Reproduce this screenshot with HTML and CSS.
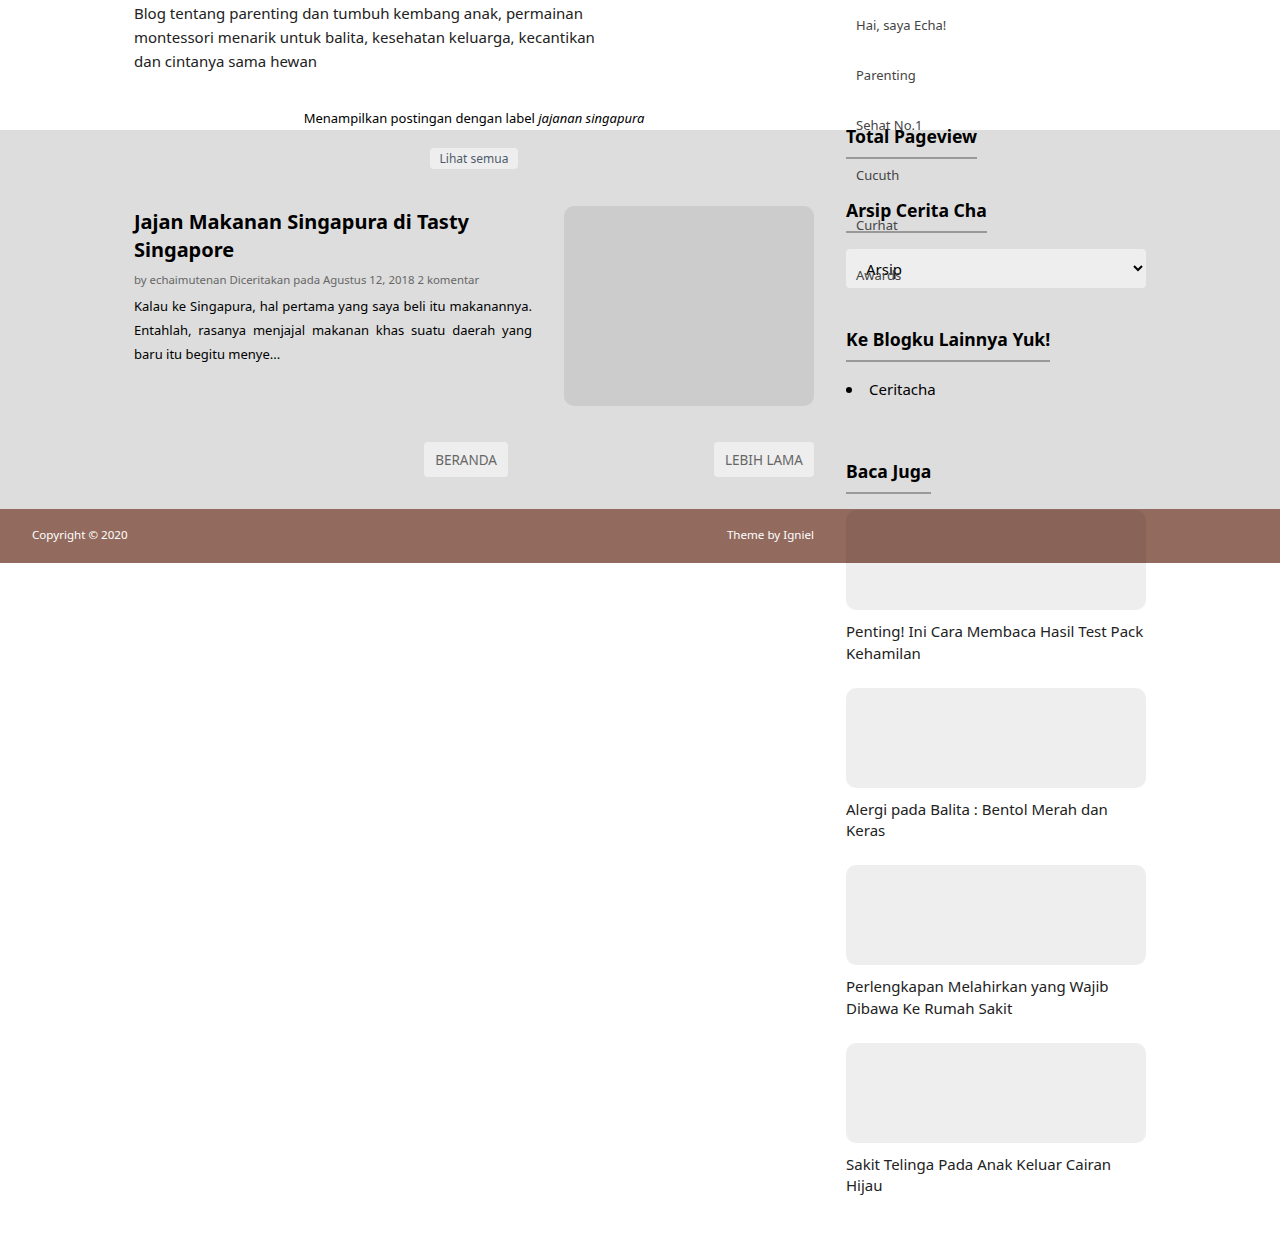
FILE: index.html
```html
<!DOCTYPE html>
<html lang="id">
<head>
<meta charset="utf-8">
<title>Jajanan singapura</title>
<link rel="stylesheet" href="styles.css">
</head>
<body>
<div class="page">
  <header class="band band-head">
    <p class="desc">Blog tentang parenting dan tumbuh kembang anak, permainan montessori menarik untuk balita, kesehatan keluarga, kecantikan dan cintanya sama hewan</p>
    <div class="label-note">Menampilkan postingan dengan label <em>jajanan singapura</em></div>
  </header>

  <main class="band band-main">
    <div class="main-col">
      <div class="see-all-row"><a class="see-all" href="#">Lihat semua</a></div>
      <article class="post">
        <div class="post-text">
          <h1 class="post-title">Jajan Makanan Singapura di Tasty Singapore</h1>
          <div class="post-meta">by echaimutenan Diceritakan pada Agustus 12, 2018 2 komentar</div>
          <p class="post-excerpt">Kalau ke Singapura, hal pertama yang saya beli itu makanannya. Entahlah, rasanya menjajal makanan khas suatu daerah yang baru itu begitu menye...</p>
        </div>
        <div class="post-thumb"></div>
      </article>
      <nav class="pager">
        <a class="pager-btn" href="#">Beranda</a>
        <a class="pager-btn" href="#">Lebih lama</a>
      </nav>
    </div>
  </main>

  <footer class="band band-foot">
    <div class="foot-inner">
      <span>Copyright © 2020</span>
      <span>Theme by Igniel</span>
    </div>
  </footer>

  <nav class="menu">
    <a href="#">Hai, saya Echa!</a>
    <a href="#">Parenting</a>
    <a href="#">Sehat No.1</a>
    <a href="#">Cucuth</a>
    <a href="#">Curhat</a>
    <a href="#">Awards</a>
  </nav>

  <aside class="sidebar">
    <section class="widget">
      <h2 class="widget-title">Total Pageview</h2>
    </section>
    <section class="widget">
      <h2 class="widget-title">Arsip Cerita Cha</h2>
      <select class="archive"><option>Arsip</option></select>
    </section>
    <section class="widget">
      <h2 class="widget-title">Ke Blogku Lainnya Yuk!</h2>
      <ul class="blog-list"><li>Ceritacha</li></ul>
    </section>
    <section class="widget">
      <h2 class="widget-title">Baca Juga</h2>
      <div class="related">
        <a class="rel-item" href="#"><div class="rel-thumb"></div><div class="rel-title">Penting! Ini Cara Membaca Hasil Test Pack Kehamilan</div></a>
        <a class="rel-item" href="#"><div class="rel-thumb"></div><div class="rel-title">Alergi pada Balita : Bentol Merah dan Keras</div></a>
        <a class="rel-item" href="#"><div class="rel-thumb"></div><div class="rel-title">Perlengkapan Melahirkan yang Wajib Dibawa Ke Rumah Sakit</div></a>
        <a class="rel-item" href="#"><div class="rel-thumb"></div><div class="rel-title">Sakit Telinga Pada Anak Keluar Cairan Hijau</div></a>
      </div>
    </section>
  </aside>
</div>
</body>
</html>
```

FILE: styles.css
```css
* { box-sizing: border-box; }
html, body { margin: 0; padding: 0; background: #fff; }
body {
  font-family: "Noto Sans", "Open Sans", sans-serif;
  color: #222;
}
a { text-decoration: none; color: inherit; }

.page {
  display: grid;
  grid-template-columns: 134px 680px 32px 300px 1fr;
  grid-template-rows: 130px 379px 54px auto;
  min-height: 1235px;
}

.band { grid-column: 1 / -1; }

.band-head {
  grid-row: 1;
  background: #fff;
  padding-left: 134px;
  display: flex;
  flex-direction: column;
}
.desc {
  margin: 1px 0 0;
  width: 470px;
  font-size: 15px;
  line-height: 24px;
  color: #222;
}
.label-note {
  width: 680px;
  margin-top: auto;
  margin-bottom: 3px;
  text-align: center;
  font-size: 13px;
  line-height: 18px;
  color: #000;
}

.band-main {
  grid-row: 2;
  background: #ddd;
  padding-left: 134px;
}
.main-col {
  width: 680px;
  padding-top: 18px;
}
.see-all-row { display: flex; justify-content: center; }
.see-all {
  background: #eee;
  border-radius: 4px;
  font-size: 12px;
  line-height: 21px;
  padding: 0 10px;
  color: #4f5b6b;
}

.post {
  display: flex;
  gap: 32px;
  margin-top: 37px;
}
.post-text { width: 398px; }
.post-title {
  margin: 2px 0 0;
  font-size: 20px;
  line-height: 28px;
  font-weight: 700;
  color: #000;
}
.post-meta {
  margin-top: 7px;
  font-size: 11.4px;
  line-height: 18px;
  color: #666;
}
.post-excerpt {
  margin: 5px 0 0;
  font-size: 13px;
  line-height: 24px;
  text-align: justify;
  color: #000;
}
.post-thumb {
  width: 250px;
  height: 200px;
  border-radius: 10px;
  background: #ccc;
}

.pager {
  display: flex;
  justify-content: flex-end;
  gap: 206px;
  margin-top: 36px;
}
.pager-btn {
  background: #eee;
  border-radius: 4px;
  height: 35px;
  line-height: 36px;
  padding: 0 11px;
  font-size: 13.5px;
  text-transform: uppercase;
  color: #666;
}

.band-foot {
  grid-row: 3;
  background: #936b5e;
  display: flex;
  align-items: center;
  padding-left: 32px;
}
.foot-inner {
  width: 782px;
  display: flex;
  justify-content: space-between;
  font-size: 11.6px;
  line-height: 16px;
  color: #fff;
  margin-top: -2px;
}

.menu {
  grid-column: 4;
  grid-row: 1 / span 2;
  align-self: start;
  z-index: 3;
  display: flex;
  flex-direction: column;
  padding-left: 10px;
}
.menu a {
  font-size: 13px;
  line-height: 50px;
  color: #444;
}

.sidebar {
  grid-column: 4;
  grid-row: 2 / span 3;
  z-index: 2;
  margin-top: -6px;
  display: flex;
  flex-direction: column;
}
.widget { margin-bottom: 39px; }
.widget-title {
  display: inline-block;
  margin: 0 0 16px;
  padding-bottom: 9px;
  border-bottom: 2px solid #999;
  font-size: 17.6px;
  line-height: 24px;
  font-weight: 700;
  color: #000;
}
.widget:first-child .widget-title { margin-bottom: 0; }
.archive {
  display: block;
  width: 300px;
  height: 39px;
  border: none;
  border-radius: 4px;
  background: #eee;
  font-family: inherit;
  font-size: 15px;
  color: #000;
  padding-left: 16px;
}
.blog-list {
  margin: 0 0 20px;
  padding: 0;
  list-style: none;
  font-size: 15px;
  line-height: 22px;
  color: #000;
}
.blog-list li {
  display: flex;
  align-items: center;
}
.blog-list li::before {
  content: "";
  width: 6px;
  height: 6px;
  border-radius: 50%;
  background: #000;
  margin: 1px 17px 0 0;
}
.related { display: flex; flex-direction: column; gap: 23.5px; }
.rel-item { display: block; }
.rel-thumb {
  height: 100px;
  border-radius: 10px;
  background: rgba(0, 0, 0, 0.067);
}
.rel-title {
  margin-top: 11px;
  font-size: 15px;
  line-height: 21.5px;
  color: #222;
}
```
